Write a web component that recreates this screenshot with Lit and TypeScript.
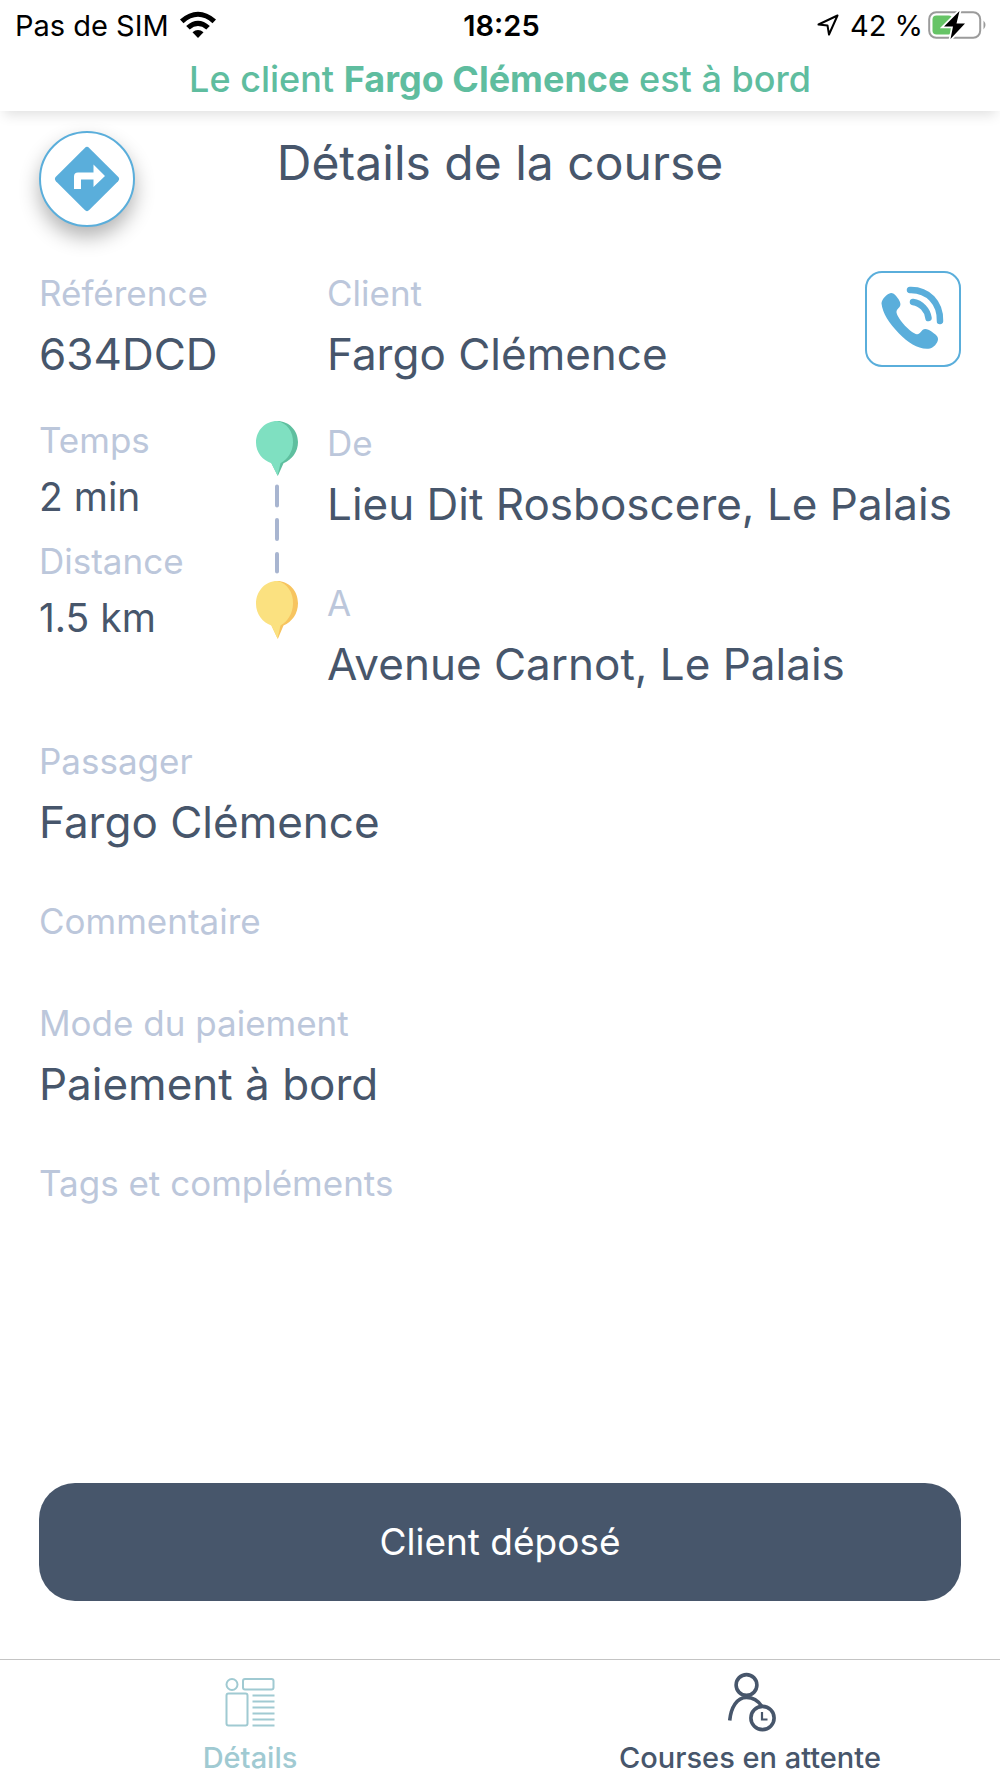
import { LitElement, html, css, svg, nothing } from "lit";
import { customElement, property } from "lit/decorators.js";

/** A caption with the value below it. */
@customElement("ride-field")
export class RideField extends LitElement {
  @property() label = "";
  @property() value = "";
  @property({ type: Boolean, reflect: true }) compact = false;

  static styles = css`
    :host {
      display: block;
      min-height: 53px;
    }
    .list,
    .value {
      margin: 0;
    }
    .label {
      color: #bcc7db;
      font-size: 35px;
      line-height: 44px;
    }
    .value {
      margin-top: 11px;
      color: #47566b;
      font-size: 44px;
      line-height: 56px;
    }
    :host([compact]) .value {
      font-size: 39px;
      line-height: 48px;
    }
  `;

  render() {
    return html`<dl class="list">
      <dt class="label">${this.label}</dt>
      ${this.value ? html`<dd class="value">${this.value}</dd>` : nothing}
    </dl>`;
  }
}

const wifiIcon = html`<svg width="38" height="28" viewBox="0 0 38 28" aria-hidden="true">
  <path d="M1 8.500 Q19 -7 37 8.500 L33.500 12.200 Q19 -0.500 4.500 12.200 Z" />
  <path d="M7.200 15 Q19 4.600 30.800 15 L27.300 18.500 Q19 11.600 10.700 18.500 Z" />
  <path d="M13.500 21.300 Q19 16.800 24.500 21.300 L19 27 Z" />
</svg>`;

const locationIcon = html`<svg width="24" height="24" viewBox="0 0 24 24" aria-hidden="true">
  <path d="M21.500 2.500 L2.500 11.500 L11.500 12.500 L13 21.500 Z" fill="none" stroke="#000" stroke-width="2" stroke-linejoin="round" />
</svg>`;

const batteryIcon = html`<svg width="60" height="30" viewBox="0 0 60 30" aria-hidden="true">
  <rect x="1.200" y="2.200" width="51" height="25.600" rx="7" fill="none" stroke="#9b9b9b" stroke-width="2" />
  <path d="M55.500 10.500 Q59.500 15 55.500 19.500 Z" fill="#9b9b9b" />
  <rect x="4.500" y="5.500" width="20" height="19" rx="4" fill="#66c466" />
  <path d="M31.500 1 L16 16.500 H25 L22.500 29 L37 13.500 H28.500 Z" fill="#000" stroke="#fff" stroke-width="3.500" paint-order="stroke" />
</svg>`;

const directionsIcon = html`<svg width="66" height="66" viewBox="0 0 66 66" aria-hidden="true">
  <path d="M30.800 1.900 Q33 -0.200 35.200 1.900 L64.100 30.800 Q66.200 33 64.100 35.200 L35.200 64.100 Q33 66.200 30.800 64.100 L1.900 35.200 Q-0.200 33 1.900 30.800 Z" fill="#5aaedb" />
  <path d="M20 43 V30.500 Q20 26.500 24 26.500 H39.500 V18.500 L51 30 L39.500 41 V33.500 H27 V43 Z" fill="#fff" />
</svg>`;

const phoneIcon = html`<svg width="64" height="64" viewBox="0 -5 64 64" fill="#5aaedb" aria-hidden="true">
  <path d="M0.500 11.500 C0.500 7.500 6 1.500 10 1 C13 0.800 15 3.500 17 6.500 C19 9.500 20.500 12.500 18.500 15 C16.500 17.500 15.200 18.300 15.500 20.500 C17 27.500 30 41.500 36 42.200 C38.500 42.500 39.500 40 41.500 38 C44 35.800 47.500 37.500 50.500 39.500 C54 42 57.500 44.500 57 47.500 C56.500 51.500 52.500 55.500 49 56.500 C38 58 28 51.500 18 41.500 C8 31 1.500 21 0.500 11.500 Z" />
  <g fill="none" stroke="#5aaedb" stroke-width="6.500" stroke-linecap="round">
    <path d="M32 10 C40 11 46.500 18 47.500 26" />
    <path d="M29 -2 C47 -2.500 59.500 11 59 29" />
  </g>
</svg>`;

const pin = (y: number, height: number, light: string, dark: string) => svg`
  <svg y=${y} width="42" height=${height} viewBox="0 0 42 56" preserveAspectRatio="none">
    <path d="M21 0 C33 0 42 9.500 42 21.500 C42 31.500 36 39.500 27.500 43 L21.800 56 L15.500 43 C20 30 20 10 21 0 Z" fill=${dark} />
    <path d="M21 0 C31 2 37.500 11 37 22 C36.800 31 32 39 24.500 43 L21.500 55.500 L15.300 43 C6.500 40 0 32 0 22 C0 9.500 9.500 0 21 0 Z" fill=${light} />
  </svg>`;

const routeGraphic = html`<svg class="route" width="42" height="218" viewBox="0 0 42 218" aria-hidden="true">
  ${pin(0, 55, "#7fe0c1", "#5fbf9f")}
  <path d="M21 65.500 V84.500 M21 99 V118 M21 133 V150.500" stroke="#a8b5d0" stroke-width="4" stroke-linecap="round" />
  ${pin(160, 58, "#fbe180", "#f7c45f")}
</svg>`;

const detailsIcon = html`<svg width="50" height="60" viewBox="0 0 50 60" fill="none" stroke="#a0cad2" stroke-width="2" aria-hidden="true">
  <circle cx="7" cy="11.500" r="5.500" />
  <rect x="18" y="6" width="30.500" height="10.500" rx="2" />
  <rect x="1.500" y="20.500" width="21" height="32" rx="2" />
  <path d="M27.500 22.500 H49.500 M27.500 28.500 H49.500 M27.500 34.500 H49.500 M27.500 40.500 H49.500 M27.500 46.500 H49.500 M27.500 52.500 H49.500" />
</svg>`;

const waitingIcon = html`<svg width="50" height="60" viewBox="-2 0 50 60" fill="none" stroke="#47566b" stroke-width="3.600" aria-hidden="true">
  <circle cx="19.500" cy="12" r="10.400" />
  <path d="M2.700 47.500 C4 34 10 24.500 19.500 24.500 C26 24.500 31 27.500 34.500 33" />
  <circle cx="35.500" cy="45" r="11.600" />
  <path d="M35 39 V46.500 H40.500" stroke-width="2.200" />
</svg>`;

@customElement("app-root")
export class AppRoot extends LitElement {
  static styles = css`
    :host {
      display: flex;
      flex-direction: column;
      min-height: 100vh;
      background: #fff;
      color: #47566b;
      font-family: Inter, "Liberation Sans", sans-serif;
    }
    svg {
      display: block;
      flex: none;
      overflow: visible;
    }
    .top {
      box-shadow: 0 8px 12px -4px rgba(0, 0, 0, 0.12);
    }
    .status {
      display: grid;
      grid-template-columns: 1fr auto 1fr;
      align-items: center;
      height: 50px;
      padding: 0 12px 0 15px;
      color: #000;
      font-size: 29px;
    }
    .carrier,
    .power {
      display: flex;
      align-items: center;
      gap: 10px;
    }
    .power {
      justify-content: flex-end;
    }
    .charge {
      display: flex;
      align-items: center;
      gap: 5px;
    }
    .clock {
      font-weight: 600;
    }
    .banner {
      margin: 0;
      padding: 8px 16px 11px;
      color: #5fbd9f;
      font-size: 36px;
      font-weight: 500;
      line-height: 42px;
      text-align: center;
    }
    .name {
      font-weight: 700;
    }
    .content {
      display: flex;
      flex: 1;
      flex-direction: column;
      padding: 20px 39px 58px;
    }
    .heading {
      display: grid;
      grid-template-columns: 96px 1fr 96px;
    }
    .title {
      margin: 0;
      font-size: 48px;
      font-weight: 400;
      line-height: 64px;
      text-align: center;
    }
    .round,
    .call {
      display: flex;
      align-items: center;
      justify-content: center;
      box-sizing: border-box;
      width: 96px;
      height: 96px;
      padding: 0;
      border: 2px solid #5aaedb;
      background: #fff;
    }
    .round {
      border-radius: 50%;
      box-shadow: 0 10px 20px rgba(0, 0, 0, 0.3);
    }
    .call {
      border-radius: 17px;
    }
    .summary,
    .trip {
      display: grid;
      grid-template-columns: 217px 42px 1fr;
    }
    .summary {
      margin-top: 44px;
    }
    .client {
      display: flex;
      grid-column: 3;
      justify-content: space-between;
      padding-left: 29px;
    }
    .trip {
      margin-top: 36px;
      align-items: start;
    }
    .figures {
      display: grid;
      gap: 18px;
    }
    .route {
      margin-top: 3px;
    }
    .stops {
      display: grid;
      gap: 49px;
      padding: 3px 0 0 29px;
    }
    .extras {
      display: grid;
      gap: 49px;
      margin: 47px 0;
    }
    .submit {
      margin-top: auto;
      padding: 35px;
      border: 0;
      border-radius: 36px;
      background: #47566b;
      color: #fff;
      font-family: inherit;
      font-size: 37px;
      line-height: 48px;
    }
    .tabs {
      display: grid;
      grid-template-columns: 1fr 1fr;
      border-top: 1px solid #c4c4c4;
    }
    .tab {
      display: flex;
      flex-direction: column;
      align-items: center;
      gap: 9px;
      padding: 13px 0 4px;
      color: #47566b;
      font-size: 29px;
      font-weight: 500;
      line-height: 32px;
      text-decoration: none;
    }
    .active {
      color: #a0cad2;
    }
  `;

  render() {
    return html`
      <header class="top">
        <div class="status">
          <span class="carrier">Pas de SIM ${wifiIcon}</span>
          <time class="clock">18:25</time>
          <span class="power">
            ${locationIcon}
            <span class="charge">42 % ${batteryIcon}</span>
          </span>
        </div>
        <p class="banner">Le client <strong class="name">Fargo Clémence</strong> est à bord</p>
      </header>
      <main class="content">
        <div class="heading">
          <button class="round" type="button" aria-label="Itinéraire">${directionsIcon}</button>
          <h1 class="title">Détails de la course</h1>
        </div>
        <section class="summary">
          <ride-field label="Référence" value="634DCD"></ride-field>
          <div class="client">
            <ride-field label="Client" value="Fargo Clémence"></ride-field>
            <button class="call" type="button" aria-label="Appeler le client">${phoneIcon}</button>
          </div>
        </section>
        <section class="trip">
          <div class="figures">
            <ride-field compact label="Temps" value="2 min"></ride-field>
            <ride-field compact label="Distance" value="1.5 km"></ride-field>
          </div>
          ${routeGraphic}
          <div class="stops">
            <ride-field label="De" value="Lieu Dit Rosboscere, Le Palais"></ride-field>
            <ride-field label="A" value="Avenue Carnot, Le Palais"></ride-field>
          </div>
        </section>
        <section class="extras">
          <ride-field label="Passager" value="Fargo Clémence"></ride-field>
          <ride-field label="Commentaire"></ride-field>
          <ride-field label="Mode du paiement" value="Paiement à bord"></ride-field>
          <ride-field label="Tags et compléments"></ride-field>
        </section>
        <button class="submit" type="button">Client déposé</button>
      </main>
      <nav class="tabs">
        <a class="tab active" href="#details" aria-current="page">${detailsIcon}Détails</a>
        <a class="tab" href="#courses">${waitingIcon}Courses en attente</a>
      </nav>
    `;
  }
}
